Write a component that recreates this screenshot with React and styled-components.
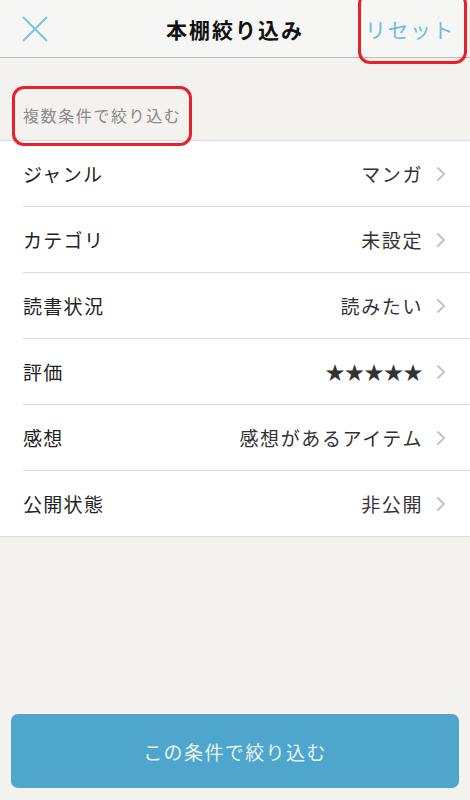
import React from 'react'
import styled, { createGlobalStyle } from 'styled-components'

const GlobalStyle = createGlobalStyle`
  html, body {
    margin: 0;
    padding: 0;
    background: #f3f2ef;
    font-family: 'Noto Sans CJK JP', 'Noto Sans', sans-serif;
  }
`

const Screen = styled.div`
  width: 470px;
  height: 800px;
  display: flex;
  flex-direction: column;
  background: #f3f2ef;
`

const Header = styled.div`
  height: 57px;
  flex-shrink: 0;
  display: grid;
  grid-template-columns: 110px 1fr 110px;
  align-items: center;
  background: #f6f6f5;
  border-bottom: 1px solid #bdbdbd;
`

const CloseButton = styled.div`
  padding-left: 22px;
  display: flex;
  align-items: center;
`

const Title = styled.div`
  text-align: center;
  font-size: 21px;
  font-weight: 700;
  color: #111;
  letter-spacing: 2px;
`

const Reset = styled.div`
  position: relative;
  justify-self: end;
  margin-right: 15px;
  font-size: 21px;
  color: #6ebddd;
  letter-spacing: 1.5px;
`

// red annotation frame drawn over the content
const Mark = styled.span`
  position: absolute;
  top: ${p => p.$top}px;
  bottom: ${p => p.$bottom}px;
  left: ${p => p.$left}px;
  right: ${p => p.$right}px;
  border: 3px solid #ea1f2a;
  border-radius: 12px;
  pointer-events: none;
`

const SectionHead = styled.div`
  height: 82px;
  flex-shrink: 0;
  display: flex;
  align-items: flex-end;
  padding: 0 0 13px 23px;
  box-sizing: border-box;
`

const SectionLabel = styled.span`
  position: relative;
  font-size: 16px;
  color: #8a8a8a;
  letter-spacing: 1.6px;
`

const List = styled.div`
  background: #fff;
  border-top: 1px solid #dcdcdc;
  border-bottom: 1px solid #dcdcdc;
`

const Row = styled.div`
  height: 65px;
  display: flex;
  align-items: center;
  margin-left: 23px;
  padding-right: 24px;
  border-bottom: ${p => (p.$last ? 'none' : '1px solid #dcdcdc')};
`

const Label = styled.span`
  flex: 1;
  font-size: 19px;
  color: #222;
  letter-spacing: 1.3px;
`

const Value = styled.span`
  font-size: 19px;
  color: #333;
  margin-right: 13px;
  letter-spacing: ${p => (p.$stars ? '0.5px' : '1.6px')};
`

const Spacer = styled.div`
  flex: 1;
`

const SubmitButton = styled.button`
  margin: 0 11px 12px;
  height: 74px;
  flex-shrink: 0;
  border: none;
  border-radius: 7px;
  background: #4fa6cc;
  color: #e9f3f8;
  font-family: 'Noto Sans CJK JP', 'Noto Sans', sans-serif;
  font-size: 19px;
  letter-spacing: 1.4px;
`

const Chevron = () => (
  <svg width="10" height="16" viewBox="0 0 10 16">
    <polyline points="1.5,1.5 8,8 1.5,14.5" fill="none" stroke="#c4c4c8" strokeWidth="2" />
  </svg>
)

const CloseIcon = () => (
  <svg width="26" height="26" viewBox="0 0 26 26">
    <path d="M1 1 L25 25 M25 1 L1 25" stroke="#7cc3e0" strokeWidth="2" fill="none" />
  </svg>
)

const filters = [
  { label: 'ジャンル', value: 'マンガ' },
  { label: 'カテゴリ', value: '未設定' },
  { label: '読書状況', value: '読みたい' },
  { label: '評価', value: '★★★★★', stars: true },
  { label: '感想', value: '感想があるアイテム' },
  { label: '公開状態', value: '非公開' },
]

export default function App() {
  return (
    <Screen>
      <GlobalStyle />
      <Header>
        <CloseButton><CloseIcon /></CloseButton>
        <Title>本棚絞り込み</Title>
        <Reset>
          リセット
          <Mark $top={-22} $bottom={-20} $left={-7} $right={-12} />
        </Reset>
      </Header>
      <SectionHead>
        <SectionLabel>
          複数条件で絞り込む
          <Mark $top={-17} $bottom={-19} $left={-11} $right={-11} />
        </SectionLabel>
      </SectionHead>
      <List>
        {filters.map((f, i) => (
          <Row key={f.label} $last={i === filters.length - 1}>
            <Label>{f.label}</Label>
            <Value $stars={f.stars}>{f.value}</Value>
            <Chevron />
          </Row>
        ))}
      </List>
      <Spacer />
      <SubmitButton>この条件で絞り込む</SubmitButton>
    </Screen>
  )
}
